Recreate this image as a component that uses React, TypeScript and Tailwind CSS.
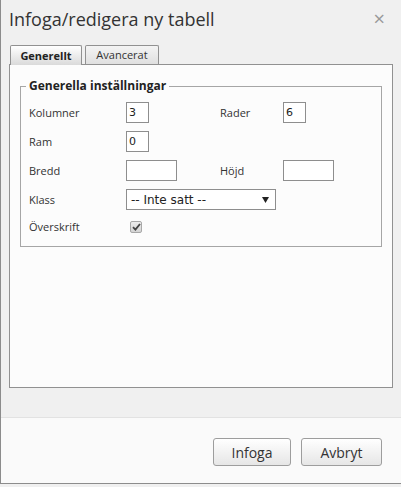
import React from "react";

const font = { fontFamily: '"Open Sans", "Liberation Sans", sans-serif' };
const verdana = { fontFamily: '"DejaVu Sans", Verdana, sans-serif' };

const TextBox = ({ value, wide }: { value?: string; wide?: boolean }) => (
  <div
    className={`${wide ? "w-[51px]" : "w-[23px]"} h-[21px] border border-[#8e8e8e] bg-white pl-[2px] text-[11px] leading-[19px] text-[#222]`}
    style={verdana}
  >
    {value}
  </div>
);

const Label = ({ children }: { children: React.ReactNode }) => (
  <div className="text-[11px] leading-[21px] text-[#333]">{children}</div>
);

export default function App() {
  return (
    <div className="w-[401px] h-[487px] bg-[#f0f0f0]" style={font}>
      <div className="w-[401px] h-[484px] border-l border-b border-[#8c8c8c] flex flex-col">
        {/* header + body */}
        <div className="h-[417px] bg-[#f0f0f0] flex flex-col">
          <div className="h-[45px] flex items-start justify-between pl-[8px] pr-[16px] pt-[6px]">
            <span className="text-[18px] leading-[26px] text-[#333]">
              Infoga/redigera ny tabell
            </span>
            <span className="text-[20px] leading-[26px] text-[#999]">×</span>
          </div>

          {/* tabs */}
          <div className="flex pl-[9px] gap-[3px] h-[19px]">
            <div className="relative z-10 w-[72px] h-[20px] border border-b-0 border-[#919191] rounded-t-[2px] bg-gradient-to-b from-white to-[#dadada] text-[11px] font-bold leading-[19px] text-[#222] text-center">
              Generellt
            </div>
            <div className="w-[74px] h-[19px] border border-b-0 border-[#919191] rounded-t-[2px] bg-gradient-to-b from-[#f4f4f4] to-[#e0e0e0] text-[11px] leading-[18px] text-[#333] text-center">
              Avancerat
            </div>
          </div>

          {/* panel */}
          <div className="ml-[8px] w-[384px] h-[324px] border border-[#919191] bg-[#fcfcfc] pt-[13px] px-[10px]">
            <fieldset className="border border-[#a6a6a6] pl-[5px] pr-[10px] pb-[11px]">
              <legend className="px-[3px] text-[12px] font-bold leading-[16px] text-[#222]">
                Generella inställningar
              </legend>
              <div className="ml-[3px] mt-[8px] grid grid-cols-[97px_94px_63px_1fr] gap-y-[8px]">
                <Label>Kolumner</Label>
                <TextBox value="3" />
                <Label>Rader</Label>
                <TextBox value="6" />

                <Label>Ram</Label>
                <TextBox value="0" />
                <div />
                <div />

                <Label>Bredd</Label>
                <TextBox wide />
                <Label>Höjd</Label>
                <TextBox wide />

                <Label>Klass</Label>
                <div className="col-span-3">
                  <div
                    className="w-[150px] h-[21px] border border-[#8e8e8e] bg-white flex items-center justify-between pl-[4px] pr-[6px] text-[12px] text-[#222]"
                    style={verdana}
                  >
                    <span>-- Inte satt --</span>
                    <svg width="7" height="6" viewBox="0 0 7 6">
                      <path d="M0 0 L7 0 L3.5 6 Z" fill="#222" />
                    </svg>
                  </div>
                </div>

                <div className="text-[11px] leading-[17px] text-[#333]">Överskrift</div>
                <div className="col-span-3 flex items-center pl-[4px]">
                  <span className="w-[12px] h-[12px] border border-[#a8a8a8] rounded-[2px] bg-gradient-to-b from-[#ededed] to-[#d4d4d4] flex items-center justify-center">
                    <svg width="9" height="8" viewBox="0 0 9 8">
                      <path
                        d="M1 4.2 L3.4 6.6 L8 1"
                        fill="none"
                        stroke="#444"
                        strokeWidth="1.8"
                      />
                    </svg>
                  </span>
                </div>
              </div>
            </fieldset>
          </div>
        </div>

        {/* footer */}
        <div className="flex-1 bg-[#fafafa] border-t border-[#e2e2e2] flex justify-end items-start gap-[10px] pt-[20px] pr-[19px]">
          <button className="w-[78px] h-[28px] border border-[#9d9d9d] rounded-[3px] bg-gradient-to-b from-white to-[#e6e6e6] text-[14px] text-[#333]">
            Infoga
          </button>
          <button className="w-[81px] h-[28px] border border-[#9d9d9d] rounded-[3px] bg-gradient-to-b from-white to-[#e6e6e6] text-[14px] text-[#333]">
            Avbryt
          </button>
        </div>
      </div>
    </div>
  );
}
